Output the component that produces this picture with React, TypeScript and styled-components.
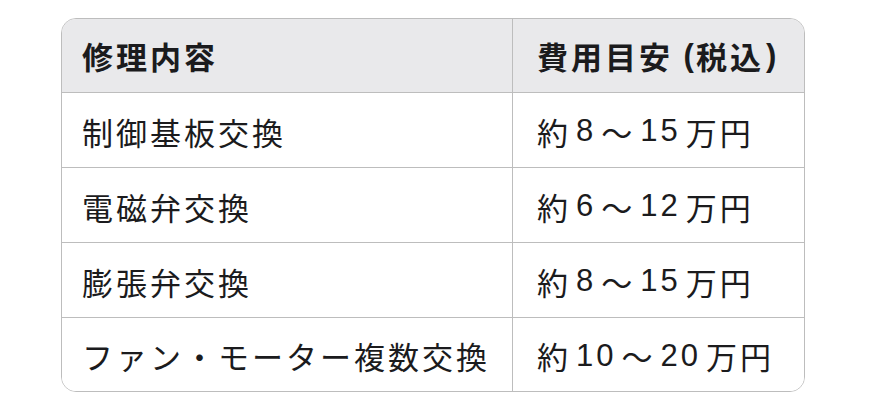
import React from "react";
import styled, { createGlobalStyle } from "styled-components";

const Global = createGlobalStyle`
  html, body { margin: 0; padding: 0; background: #ffffff; }
  body { font-family: "Liberation Sans", "Noto Sans CJK JP", sans-serif; }
`;

const Page = styled.div`
  width: 874px;
  height: 415px;
  padding: 18px 0 0 61px;
  box-sizing: border-box;
`;

const Table = styled.div`
  width: 744px;
  border: 1.5px solid #bdbdbd;
  border-radius: 15px;
  overflow: hidden;
  box-sizing: border-box;
  display: grid;
  grid-template-columns: 450px 1fr;
`;

const Cell = styled.div<{ $head?: boolean; $right?: boolean; $pos: "head" | "mid" | "last" }>`
  height: ${(p) => (p.$pos === "head" ? 74 : p.$pos === "mid" ? 75 : 73)}px;
  box-sizing: border-box;
  display: flex;
  align-items: center;
  padding-left: ${(p) => (p.$right ? 24 : 20)}px;
  padding-top: ${(p) => (p.$pos === "head" ? 0 : 2)}px;
  background: ${(p) => (p.$head ? "#e9e9eb" : "#ffffff")};
  border-left: ${(p) => (p.$right ? "1.5px solid #bdbdbd" : "none")};
  border-bottom: ${(p) => (p.$pos === "last" ? "none" : "1.5px solid #bdbdbd")};
  font-size: 31px;
  font-weight: ${(p) => (p.$head ? 700 : 400)};
  color: #1b1b1d;
  letter-spacing: 3px;
  white-space: nowrap;
`;

const Num = styled.span`
  font-family: "Liberation Sans", sans-serif;
  margin: 0 5px;
`;

const Paren = styled.span`
  font-family: "Liberation Sans", sans-serif;
  letter-spacing: 0;
  margin: 0 2px;
`;

type Price = [string, string];
const rows: [string, Price][] = [
  ["制御基板交換", ["8", "15"]],
  ["電磁弁交換", ["6", "12"]],
  ["膨張弁交換", ["8", "15"]],
  ["ファン・モーター複数交換", ["10", "20"]],
];

export default function App() {
  return (
    <>
      <Global />
      <Page>
        <Table>
          <Cell $head $pos="head">修理内容</Cell>
          <Cell $head $right $pos="head">
            費用目安<Paren>&nbsp;(</Paren>税込<Paren>)</Paren>
          </Cell>
          {rows.map(([a, [lo, hi]], i) => {
            const pos = i === rows.length - 1 ? "last" : "mid";
            return (
              <React.Fragment key={i}>
                <Cell $pos={pos}>{a}</Cell>
                <Cell $right $pos={pos}>
                  約<Num>{lo}</Num>〜<Num>{hi}</Num>万円
                </Cell>
              </React.Fragment>
            );
          })}
        </Table>
      </Page>
    </>
  );
}
